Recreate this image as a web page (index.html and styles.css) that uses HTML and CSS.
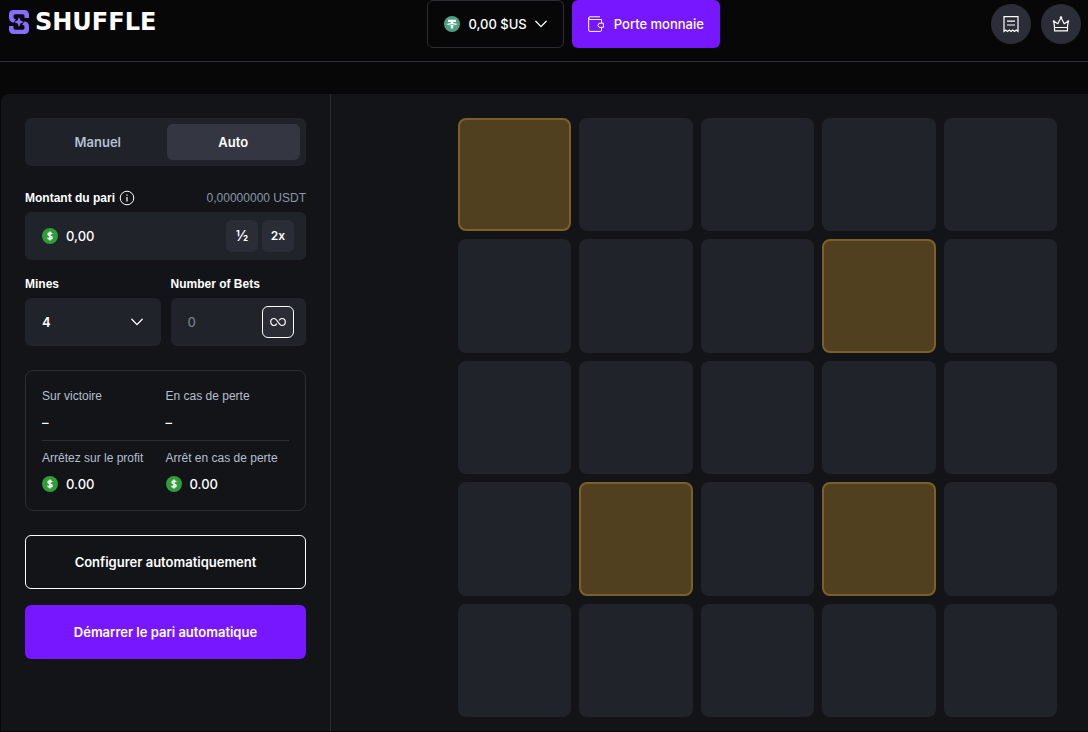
FILE: index.html
```html
<!DOCTYPE html>
<html lang="fr">
<head>
<meta charset="utf-8">
<meta name="viewport" content="width=device-width, initial-scale=1">
<title>Shuffle – Mines</title>
<link rel="stylesheet" href="styles.css">
</head>
<body>
<svg class="defs" aria-hidden="true">
  <symbol id="coin" viewBox="0 0 16 16">
    <circle cx="8" cy="8" r="8" fill="#2f9e38"/>
    <path d="M10.1 6.2C9.9 5.3 9.1 4.9 8 4.9c-1.200 0-2 .5-2 1.400 0 2.100 4.100 1 4.100 3.300 0 1-.9 1.500-2.100 1.500-1.200 0-2.100-.5-2.200-1.500M8 3.500v9" fill="none" stroke="#fff" stroke-width="1.500"/>
  </symbol>
  <symbol id="chevron" viewBox="0 0 12 8">
    <path d="M.8 1.200 6 6.600l5.200-5.400" fill="none" stroke="#fff" stroke-width="1.300" stroke-linecap="round" stroke-linejoin="round"/>
  </symbol>
</svg>

<header class="header">
  <a class="logo" href="#">
    <svg width="22" height="26" viewBox="0 0 22 26" aria-hidden="true">
      <path d="M5 1h11.500A4.500 4.500 0 0 1 21 5.500V9h-4.500V7q0-1.700-1.700-1.700H7.200Q5.500 5.300 5.500 7v1.300q0 1.700 1.700 1.700H8L5.600 13.500A4.600 4.600 0 0 1 1 9V5.500A4.500 4.500 0 0 1 5 1z" fill="#886cff"/>
      <path d="M17 25H5.500A4.500 4.500 0 0 1 1 20.500V17h4.500v2q0 1.700 1.700 1.700h7.600q1.700 0 1.700-1.700v-1.300q0-1.700-1.700-1.700H14l2.400-3.500A4.600 4.600 0 0 1 21 17v3.500A4.500 4.500 0 0 1 17 25z" fill="#886cff"/>
      <path d="M11 8l1.500 3.500L16 13l-3.500 1.500L11 18l-1.500-3.500L6 13l3.500-1.500z" fill="#886cff"/>
    </svg>
    <span class="wordmark">SHUFFLE</span>
  </a>
  <div class="wallet">
    <button class="balance" type="button">
      <svg width="16" height="16" viewBox="0 0 16 16" aria-hidden="true">
        <circle cx="8" cy="8" r="8" fill="#4fa083"/>
        <path d="M4 3.800h8v2.100H9.200v1.200c2.200.1 3.800.6 3.800 1.100s-1.600 1-3.800 1.100v3.300H6.800V9.300C4.600 9.200 3 8.700 3 8.200s1.600-1 3.800-1.100V5.900H4z" fill="#fff"/>
        <path d="M4.300 8.100c1.800.6 5.600.6 7.400 0" fill="none" stroke="#4fa083" stroke-width=".6"/>
      </svg>
      <span>0,00 $US</span>
      <svg class="chevron" aria-hidden="true"><use href="#chevron"/></svg>
    </button>
    <button class="deposit" type="button">
      <svg width="16" height="16" viewBox="0 0 16 16" fill="none" stroke="#fff" aria-hidden="true">
        <path d="M13.500 7V3.500H2A1.300 1.300 0 0 1 2 .8h10M.7 2.200v12q0 1.200 1.200 1.200h10.400q1.200 0 1.200-1.200V12M11.200 7.200h4.200v4.200h-4.200l-1.300-2.100z"/>
      </svg>
      <span>Porte monnaie</span>
    </button>
  </div>
  <nav class="actions">
    <button class="round" type="button" aria-label="Paris">
      <svg width="18" height="18" viewBox="0 0 18 18" fill="none" stroke="#fff" stroke-width="1.200" aria-hidden="true">
        <path d="M2 16.500V1.700h14v14.800l-1.700-1.500-1.800 1.500-1.800-1.500L9 16.500 7.300 15l-1.800 1.500L3.700 15zM5 6.200h8M5 10h8"/>
      </svg>
    </button>
    <button class="round" type="button" aria-label="VIP">
      <svg width="18" height="18" viewBox="0 0 18 18" fill="none" stroke="#fff" stroke-width="1.200" stroke-linejoin="round" aria-hidden="true">
        <path d="M2.600 12.500 1.800 6.300l4 2.400L9 2.500l3.200 6.200 4-2.400-.8 6.200zM2.500 12.500h13v3.300h-13z"/>
        <g fill="#fff" stroke="none"><circle cx="9" cy="2.500" r="1.200"/><circle cx="1.800" cy="6.300" r="1.100"/><circle cx="16.200" cy="6.300" r="1.100"/></g>
      </svg>
    </button>
  </nav>
</header>

<main class="game">
  <form class="sidebar">
    <div class="tabs">
      <button class="tab" type="button">Manuel</button>
      <button class="tab tab-active" type="button">Auto</button>
    </div>

    <div class="group amount-group">
      <div class="label-row">
        <label class="label" for="amount">Montant du pari</label>
        <svg width="16" height="16" viewBox="0 0 16 16" fill="none" stroke="#fff" aria-hidden="true">
          <circle cx="8" cy="8" r="6.800"/><path d="M8 7v4.500M8 4.500v1.200" stroke-width="1.200"/>
        </svg>
        <span class="converted">0,00000000 USDT</span>
      </div>
      <div class="field">
        <svg class="coin" aria-hidden="true"><use href="#coin"/></svg>
        <input class="input" id="amount" type="text" value="0,00">
        <button class="mini mini-half" type="button">½</button>
        <button class="mini" type="button">2x</button>
      </div>
    </div>

    <div class="pair">
      <div class="group">
        <label class="label" for="mines">Mines</label>
        <div class="field select-field">
          <select class="input" id="mines"><option>3</option><option selected>4</option><option>5</option></select>
          <svg class="chevron" aria-hidden="true"><use href="#chevron"/></svg>
        </div>
      </div>
      <div class="group">
        <label class="label" for="bets">Number of Bets</label>
        <div class="field">
          <input class="input" id="bets" type="text" placeholder="0">
          <button class="mini mini-outlined" type="button" aria-label="Infini">
            <svg width="16" height="10" viewBox="0 0 16 10" fill="none" stroke="#fff" stroke-width="1.200" aria-hidden="true">
              <path d="M6.800 6.600C6 7.900 5.300 8.500 4.200 8.500a3.500 3.500 0 0 1 0-7C7.300 1.500 8.700 8.500 11.800 8.500a3.500 3.500 0 0 0 0-7c-1.100 0-1.800.6-2.600 1.900"/>
            </svg>
          </button>
        </div>
      </div>
    </div>

    <section class="summary">
      <div class="summary-row">
        <div class="stat"><span class="stat-name">Sur victoire</span><span class="stat-value">–</span></div>
        <div class="stat"><span class="stat-name">En cas de perte</span><span class="stat-value">–</span></div>
      </div>
      <div class="summary-row">
        <div class="stat"><span class="stat-name">Arrêtez sur le profit</span><span class="stat-value"><svg class="coin" aria-hidden="true"><use href="#coin"/></svg>0.00</span></div>
        <div class="stat"><span class="stat-name">Arrêt en cas de perte</span><span class="stat-value"><svg class="coin" aria-hidden="true"><use href="#coin"/></svg>0.00</span></div>
      </div>
    </section>

    <div class="submit">
      <button class="cta cta-outlined" type="button">Configurer automatiquement</button>
      <button class="cta cta-primary" type="button">Démarrer le pari automatique</button>
    </div>
  </form>

  <section class="stage">
    <div class="board">
      <button class="tile tile-picked" type="button" aria-label="Case 1"></button>
      <button class="tile" type="button" aria-label="Case 2"></button>
      <button class="tile" type="button" aria-label="Case 3"></button>
      <button class="tile" type="button" aria-label="Case 4"></button>
      <button class="tile" type="button" aria-label="Case 5"></button>
      <button class="tile" type="button" aria-label="Case 6"></button>
      <button class="tile" type="button" aria-label="Case 7"></button>
      <button class="tile" type="button" aria-label="Case 8"></button>
      <button class="tile tile-picked" type="button" aria-label="Case 9"></button>
      <button class="tile" type="button" aria-label="Case 10"></button>
      <button class="tile" type="button" aria-label="Case 11"></button>
      <button class="tile" type="button" aria-label="Case 12"></button>
      <button class="tile" type="button" aria-label="Case 13"></button>
      <button class="tile" type="button" aria-label="Case 14"></button>
      <button class="tile" type="button" aria-label="Case 15"></button>
      <button class="tile" type="button" aria-label="Case 16"></button>
      <button class="tile tile-picked" type="button" aria-label="Case 17"></button>
      <button class="tile" type="button" aria-label="Case 18"></button>
      <button class="tile tile-picked" type="button" aria-label="Case 19"></button>
      <button class="tile" type="button" aria-label="Case 20"></button>
      <button class="tile" type="button" aria-label="Case 21"></button>
      <button class="tile" type="button" aria-label="Case 22"></button>
      <button class="tile" type="button" aria-label="Case 23"></button>
      <button class="tile" type="button" aria-label="Case 24"></button>
      <button class="tile" type="button" aria-label="Case 25"></button>
    </div>
  </section>
</main>
</body>
</html>
```

FILE: styles.css
```css
* {
  box-sizing: border-box;
}

body {
  margin: 0;
  background: #070707;
  color: #fff;
  font-family: Inter, "Liberation Sans", sans-serif;
  font-size: 13px;
  line-height: 20px;
}

button,
input,
select {
  font: inherit;
  color: inherit;
  margin: 0;
  padding: 0;
  border: 0;
  background: none;
}

button {
  cursor: pointer;
}

svg {
  display: block;
  flex: none;
}

.defs {
  position: absolute;
  width: 0;
  height: 0;
}

.coin {
  width: 16px;
  height: 16px;
}

.chevron {
  width: 12px;
  height: 8px;
}

/* Header */

.header {
  display: flex;
  justify-content: space-between;
  align-items: center;
  padding: 0 7px 13px 8px;
  border-bottom: 1px solid #2c2e33;
}

.logo {
  display: flex;
  align-items: center;
  gap: 5px;
  padding-bottom: 4px;
  color: #fff;
  text-decoration: none;
}

.wordmark {
  font-family: "DejaVu Sans", sans-serif;
  font-size: 24px;
  font-weight: 700;
  line-height: 26px;
}

.wallet {
  display: flex;
  gap: 8px;
}

.balance,
.deposit {
  display: flex;
  align-items: center;
  height: 48px;
  padding: 0 16px;
  border-radius: 6px;
  font-weight: 500;
}

.balance {
  gap: 8px;
  border: 1px solid #2c2e33;
}

.deposit {
  gap: 10px;
  background: #7717ff;
}

.actions {
  display: flex;
  gap: 10px;
}

.round {
  display: grid;
  place-items: center;
  width: 40px;
  height: 40px;
  border-radius: 50%;
  background: #2b2e38;
}

/* Game panel */

.game {
  display: grid;
  grid-template-columns: 330px 1fr;
  margin: 32px 0 1px 1px;
  border-radius: 8px 0 0 0;
  background: #131418;
}

.sidebar {
  display: flex;
  flex-direction: column;
  gap: 24px;
  padding: 24px;
  border-right: 1px solid #2c2e33;
}

.tabs {
  display: grid;
  grid-template-columns: 1fr 1fr;
  gap: 2px;
  padding: 6px;
  border-radius: 6px;
  background: #20222a;
}

.tab {
  height: 36px;
  border-radius: 6px;
  color: #b4bfcf;
  font-weight: 600;
}

.tab-active {
  background: #343742;
  color: #fff;
}

.group {
  display: flex;
  flex-direction: column;
  gap: 6px;
  min-width: 0;
}

.amount-group {
  margin-bottom: -8px;
}

.label-row {
  display: flex;
  align-items: center;
  gap: 4px;
}

.label,
.converted,
.stat-name {
  font-family: "Liberation Sans", sans-serif;
  font-size: 12px;
}

.label {
  font-weight: 700;
  line-height: 16px;
}

.converted {
  margin-left: auto;
  color: #8a97a8;
  line-height: 16px;
}

.field {
  display: flex;
  align-items: center;
  gap: 4px;
  height: 48px;
  padding: 0 12px 0 17px;
  border-radius: 6px;
  background: #20232a;
}

.input {
  flex: 1;
  min-width: 0;
  height: 32px;
  outline: 0;
  font-weight: 500;
  appearance: none;
}

.coin + .input {
  padding-left: 4px;
}

.input::placeholder {
  color: #747a86;
  opacity: 1;
}

.select-field {
  padding-right: 18px;
}

.select-field .input {
  font-weight: 600;
}

.mini {
  display: grid;
  place-items: center;
  width: 32px;
  height: 32px;
  border-radius: 6px;
  background: #2a2d36;
  font-size: 12px;
  font-weight: 600;
}

.mini-half {
  font-size: 14px;
}

.mini-outlined {
  border: 1px solid #fff;
}

.pair {
  display: grid;
  grid-template-columns: 1fr 1fr;
  gap: 10px;
}

.summary {
  padding: 15px 16px 16px;
  border: 1px solid #2c2e33;
  border-radius: 8px;
}

.summary-row {
  display: grid;
  grid-template-columns: 1fr 1fr;
}

.summary-row + .summary-row {
  margin-top: 8px;
  padding-top: 7px;
  border-top: 1px solid #2c2e33;
}

.stat {
  display: flex;
  flex-direction: column;
  gap: 6px;
}

.stat-name {
  color: #b4bfcf;
  white-space: nowrap;
}

.stat-value {
  display: flex;
  align-items: center;
  gap: 8px;
  font-weight: 500;
}

.submit {
  display: flex;
  flex-direction: column;
  gap: 16px;
}

.cta {
  height: 54px;
  border-radius: 6px;
  font-weight: 600;
}

.cta-outlined {
  border: 1px solid #fff;
}

.cta-primary {
  background: #7717ff;
}

/* Board */

.stage {
  display: flex;
  justify-content: flex-end;
  align-items: flex-start;
  padding: 24px 31px 14px;
}

.board {
  display: grid;
  grid-template-columns: repeat(5, 1fr);
  gap: 8px;
  width: 100%;
  max-width: 599px;
}

.tile {
  aspect-ratio: 1;
  border-radius: 8px;
  background: #20232a;
}

.tile-picked {
  border: 2px solid #7c6027;
  background: #514020;
}
```
